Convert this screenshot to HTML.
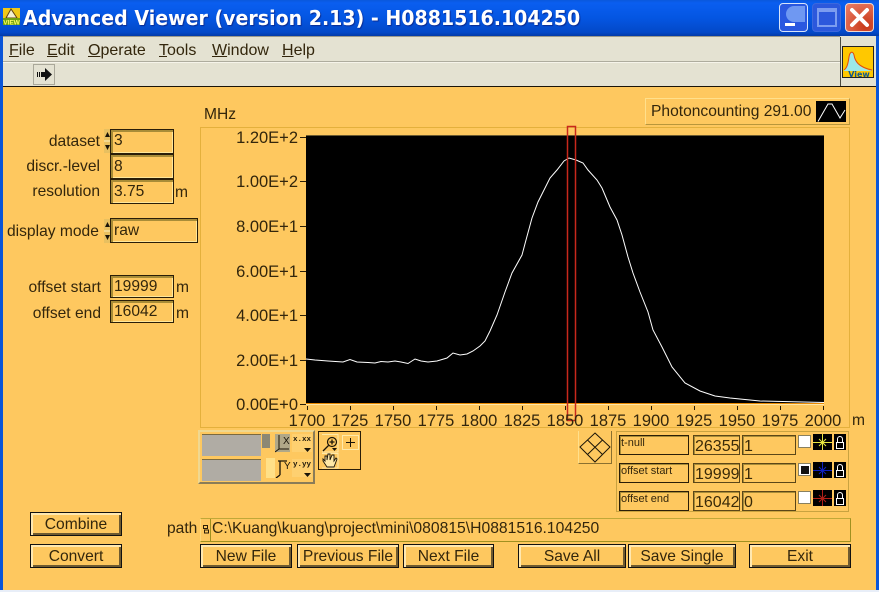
<!DOCTYPE html>
<html><head><meta charset="utf-8"><title>Advanced Viewer</title>
<style>
html,body{margin:0;padding:0}
#p{position:relative;width:879px;height:592px;overflow:hidden;background:#fec85f;font-family:"Liberation Sans",sans-serif;color:#33260c;font-size:15.6px}
#p div,#p svg{position:absolute}
.t{white-space:pre;line-height:18px;height:18px}
.r{text-align:right}
.c{text-align:center}
.f{box-sizing:border-box;border:1px solid #2a1e08;box-shadow:inset 2px 2px 0 #a88c38,inset -1px -1px 0 #ffe79a;padding-left:3px;line-height:18px;white-space:pre}
.b{box-sizing:border-box;border:1px solid #111;background:#fec85f;box-shadow:inset 2px 2px 0 #ffe8b0,inset -2px -2px 0 #6e5a30;text-align:center;line-height:23px;white-space:pre}
.s{box-sizing:border-box;border:1px solid #2a1e08;font-size:11px;line-height:15px;padding-left:1px;box-shadow:inset 1px 1px 0 #a88c38;white-space:pre}
.n{box-sizing:border-box;border:1px solid #5a4618;box-shadow:inset 1px 1px 0 #a88c38;white-space:pre;padding-left:1px;font-size:16px;color:#3a2a08}
.y{left:217px;width:81px;font-size:16.5px}
.x{top:412px;width:60px;font-size:16.5px}
u{text-decoration:underline}
</style></head><body><div id="p">
<!-- title bar -->
<div style="left:0;top:0;width:879px;height:36px;background:linear-gradient(180deg,#0a58dc 0,#0a5ef0 8%,#0456e2 50%,#0348c8 90%,#033aa8 100%)"></div>
<div style="left:0;top:36px;width:3px;height:556px;background:#0a55d8"></div>
<div style="left:876px;top:36px;width:3px;height:556px;background:#0a55d8"></div>
<div style="left:0;top:590px;width:879px;height:2px;background:#e8eef8"></div>
<svg style="left:3px;top:8px" width="17" height="17" viewBox="0 0 17 17"><rect width="17" height="17" fill="#f0c818"/><path d="M8 1L3 10h11z" fill="#f4f0d0" stroke="#604010"/><rect y="10" width="17" height="7" fill="#70a010"/><text x="8.5" y="16.3" font-family="Liberation Sans" font-size="6.5" font-weight="bold" text-anchor="middle" fill="#ffff60">VIEW</text></svg>
<div class="t" style="left:23px;top:5px;height:26px;font:bold 20.6px/26px 'DejaVu Sans',sans-serif;color:#fff;text-shadow:1px 1px 1px #0a2a90;transform:scaleX(.922);transform-origin:0 0">Advanced Viewer (version 2.13) - H0881516.104250</div>
<!-- window buttons -->
<div style="left:779px;top:3px;width:29px;height:29px;box-sizing:border-box;border:1px solid #d8e4fa;border-radius:4px;background:#2a58e0"></div>
<div style="left:785px;top:23px;width:10px;height:3px;background:#fff"></div>
<div style="left:786px;top:6px;width:19px;height:16px;border-radius:9px 0 0 9px;background:#6f98f2"></div>
<div style="left:812px;top:3px;width:29px;height:29px;box-sizing:border-box;border:1px solid #3c68dc;border-radius:4px;background:#2c58dc"></div>
<div style="left:817px;top:8px;width:20px;height:19px;box-sizing:border-box;border:2px solid #7c9cf0;border-top-width:4px"></div>
<div style="left:845px;top:3px;width:29px;height:29px;box-sizing:border-box;border:1px solid #f0d8d0;border-radius:4px;background:radial-gradient(circle at 20px 22px,#c83818,#e87860 90%)"></div>
<svg style="left:845px;top:3px" width="29" height="29"><path d="M7 7L22 22M22 7L7 22" stroke="#fff" stroke-width="4" stroke-linecap="round"/></svg>
<!-- menu -->
<div style="left:3px;top:36px;width:873px;height:50px;background:#e4e2d2"></div>
<div style="left:3px;top:36px;width:837px;height:1px;background:#9c9a8c"></div>
<div style="left:3px;top:61px;width:837px;height:2px;background:linear-gradient(180deg,#aeac9e 50%,#f6f4ea 50%)"></div>
<div style="left:840px;top:37px;width:1px;height:49px;background:#4a4a40"></div>
<div style="left:3px;top:86px;width:873px;height:1px;background:#1a1408"></div>
<div class="t" style="left:9px;top:42px;font-size:16px"><u>F</u>ile</div>
<div class="t" style="left:47px;top:42px;font-size:16px"><u>E</u>dit</div>
<div class="t" style="left:88px;top:42px;font-size:16px"><u>O</u>perate</div>
<div class="t" style="left:159px;top:42px;font-size:16px"><u>T</u>ools</div>
<div class="t" style="left:212px;top:42px;font-size:16px"><u>W</u>indow</div>
<div class="t" style="left:282px;top:42px;font-size:16px"><u>H</u>elp</div>
<div style="left:33px;top:64px;width:22px;height:21px;box-sizing:border-box;border:1px solid #aaa89a"></div>
<svg style="left:36px;top:66px" width="17" height="17"><path d="M9 2l7 6.5-7 6.500V11H5V6h4z" fill="#111"/><path d="M1 6h1v5H1zM3 6h1v5H3z" fill="#111"/></svg>
<svg style="left:842px;top:46px" width="32" height="32" viewBox="0 0 32 32"><rect x=".5" y=".5" width="31" height="31" fill="#ffc800" stroke="#222"/><path d="M2 24C5 22 6 18 7 11C8 5 11 5 12 9C13 15 15 21 30 25L30 24V25H2z" fill="#9ce8e8"/><path d="M2 24C5 22 6 18 7 11C8 5 11 5 12 9C13 15 16 21 30 24" fill="none" stroke="#e04810" stroke-width="1"/><text x="17" y="31" font-family="DejaVu Sans" font-weight="bold" font-size="8" text-anchor="middle" fill="#0c5a90">View</text></svg>
<!-- legend -->
<div style="left:645px;top:98px;width:205px;height:27px;box-sizing:border-box;border-top:1px solid #ffe08c;border-left:1px solid #ffe08c;border-bottom:1px solid #b8963c;border-right:1px solid #b8963c"></div>
<div class="t" style="left:651px;top:103px">Photoncounting 291.00</div>
<svg style="left:816px;top:101px" width="30" height="21"><rect width="30" height="21" fill="#000"/><path d="M2 20.500L12 3H16L24 17L29 9" stroke="#fff" fill="none" stroke-width="1"/></svg>
<div class="t" style="left:204px;top:106px">MHz</div>
<!-- graph frame -->
<div style="left:200px;top:127px;width:650px;height:301px;box-sizing:border-box;border:1px solid #e4b03c"></div>
<div style="left:306px;top:135px;width:518px;height:268px;background:#000"></div>
<div style="left:306px;top:135px;width:518px;height:1px;background:#6a5a30"></div>
<div style="left:306px;top:403px;width:518px;height:1px;background:#e88800"></div>
<div style="left:306px;top:404px;width:518px;height:1px;background:#ffe7a8"></div>
<svg style="left:0;top:0" width="879" height="592">
<path d="M306 359L315 360L328 361L343 362L350 359.500L357 362L368 362.500L375 363L381 361.500L388 362L395 361L401 362L408 363.500L415 359L421 361L428 362L437 361L447 358L453 353L460 355L467 354L473 351L480 346L485 341L490 331L497 315L505 292L512 273L522 255L526 240L532 218L538 202L550 178L557 170L564 161L569 158L576 160L583 163L588 170L597 180L602 188L610 207L617 220L622 235L628 257L633 273L640 292L648 312L653 330L662 347L672 367L685 383L700 391L715 396L730 398L760 401L824 402.500" fill="none" stroke="#fff" stroke-width="1"/>
<path d="M567.500 126.500H575.500V420.500H567.500Z" fill="none" stroke="#c8281c" stroke-width="1.500"/>
<path d="M300 137.500h6M300 181.500h6M300 226.500h6M300 271.500h6M300 315.500h6M300 360.500h6M300 404.500h6" stroke="#2a1e08"/>
<path d="M307.500 406v4M350.500 406v4M393.500 406v4M436.500 406v4M479.500 406v4M522.500 406v4M565.500 406v4M608.500 406v4M651.500 406v4M694.500 406v4M737.500 406v4M780.500 406v4M823.500 406v4" stroke="#2a1e08"/>
</svg>
<div class="t r y" style="top:129px">1.20E+2</div>
<div class="t r y" style="top:173px">1.00E+2</div>
<div class="t r y" style="top:218px">8.00E+1</div>
<div class="t r y" style="top:263px">6.00E+1</div>
<div class="t r y" style="top:307px">4.00E+1</div>
<div class="t r y" style="top:352px">2.00E+1</div>
<div class="t r y" style="top:396px">0.00E+0</div>
<div class="t c x" style="left:277px">1700</div>
<div class="t c x" style="left:320px">1725</div>
<div class="t c x" style="left:363px">1750</div>
<div class="t c x" style="left:406px">1775</div>
<div class="t c x" style="left:449px">1800</div>
<div class="t c x" style="left:492px">1825</div>
<div class="t c x" style="left:535px">1850</div>
<div class="t c x" style="left:578px">1875</div>
<div class="t c x" style="left:621px">1900</div>
<div class="t c x" style="left:664px">1925</div>
<div class="t c x" style="left:707px">1950</div>
<div class="t c x" style="left:750px">1975</div>
<div class="t c x" style="left:793px">2000</div>
<div class="t" style="left:852px;top:412px">m</div>
<!-- left controls -->
<div class="t r" style="left:20px;top:133px;width:80px">dataset</div>
<div class="t r" style="left:10px;top:158px;width:90px">discr.-level</div>
<div class="t r" style="left:10px;top:183px;width:90px">resolution</div>
<div class="t" style="left:7px;top:223px">display mode</div>
<div class="t r" style="left:10px;top:279px;width:91px">offset start</div>
<div class="t r" style="left:10px;top:305px;width:91px">offset end</div>
<svg style="left:104px;top:129px" width="7" height="24"><rect width="7" height="24" fill="#e8c060"/><path d="M3.500 3L1 8h5zM3.500 21L1 16h5z" fill="#1a1408"/><path d="M0 12h7" stroke="#fff2c0"/></svg>
<svg style="left:104px;top:219px" width="7" height="24"><rect width="7" height="24" fill="#e8c060"/><path d="M3.500 3L1 8h5zM3.500 21L1 16h5z" fill="#1a1408"/><path d="M0 12h7" stroke="#fff2c0"/></svg>
<div class="f" style="left:110px;top:129px;width:64px;height:25px;line-height:22px">3</div>
<div class="f" style="left:110px;top:154px;width:64px;height:25px;line-height:24px">8</div>
<div class="f" style="left:110px;top:179px;width:64px;height:25px;line-height:24px">3.75</div>
<div class="t" style="left:175px;top:184px">m</div>
<div class="f" style="left:110px;top:218px;width:88px;height:25px;line-height:24px">raw</div>
<div class="f" style="left:110px;top:275px;width:64px;height:23px;line-height:22px">19999</div>
<div class="t" style="left:176px;top:279px">m</div>
<div class="f" style="left:110px;top:300px;width:64px;height:23px;line-height:22px">16042</div>
<div class="t" style="left:176px;top:305px">m</div>
<!-- palette -->
<div style="left:198px;top:430px;width:117px;height:54px;box-sizing:border-box;border:2px solid #8a7c58;border-top-color:#f0d890;border-left-color:#f0d890;background:#fec85f"></div>
<div style="left:202px;top:434px;width:59px;height:21px;background:#b0aca4;border-top:1px solid #7a6a40"></div>
<div style="left:202px;top:459px;width:59px;height:21px;background:#b0aca4;border-top:1px solid #7a6a40"></div>
<div style="left:262px;top:434px;width:8px;height:14px;background:#8c8874"></div>
<div style="left:266px;top:458px;width:9px;height:20px;background:#ffe088"></div>
<div style="left:275px;top:434px;width:15px;height:18px;background:#b0a888"></div>
<svg style="left:275px;top:434px" width="16" height="44"><path d="M4 1v14H14M4 15L0 18" stroke="#1a1408" fill="none"/><path d="M5 27v14M5 41L1 44M3 27H12" stroke="#1a1408" fill="none" stroke-width="1.300"/><text x="8" y="10" font-size="10" font-family="Liberation Sans" fill="#1a1408">X</text><text x="9" y="35" font-size="10" font-family="Liberation Sans" fill="#1a1408">Y</text></svg>
<div style="left:292px;top:434px;width:20px;height:18px;font:bold 7.5px/12px 'Liberation Mono',monospace;background:#fed070;color:#1a1408;text-align:center">x.xx</div>
<div style="left:292px;top:459px;width:20px;height:18px;font:bold 7.5px/12px 'Liberation Mono',monospace;background:#fed070;color:#1a1408;text-align:center">y.yy</div>
<svg style="left:292px;top:434px" width="20" height="44"><path d="M12 14h7l-3.500 4zM12 39h7l-3.500 4z" fill="#1a1408"/></svg>
<div style="left:318px;top:431px;width:43px;height:39px;box-sizing:border-box;border:1px solid #2a1e08"></div>
<svg style="left:320px;top:434px" width="40" height="35"><path d="M2 .500H18V18H2M2 19.500H18V34H2" fill="none" stroke="#ffe9a8"/><circle cx="12" cy="8" r="4.500" fill="none" stroke="#1a1408" stroke-width="1.200"/><path d="M12 5.500v5M9.500 8h5M8.500 11.500L3 17" stroke="#1a1408" stroke-width="1.300"/><path d="M12 14h5l-2.500 3z" fill="#1a1408"/><rect x="22.500" y="1.500" width="16" height="14" fill="none" stroke="#ffe9a8"/><path d="M30.500 4v9M26 8.500h9" stroke="#1a1408"/><path d="M7 33L3 27V25L5 27V22L7 22V26L8 20H10V26L12 21H14V27L16 24L17 25L14 33z" fill="#ffe9a8" stroke="#1a1408" stroke-width=".9"/></svg>
<!-- cursor panel -->
<div style="left:578px;top:431px;width:34px;height:33px;box-sizing:border-box;border:1px solid #b8963c;border-top:0;border-left-color:#ffe08c;border-right-color:#8a7030;border-bottom-color:#8a7030"></div>
<svg style="left:579px;top:431px" width="32" height="32"><path d="M16 2L31 16L16 31L1 16ZM8.500 9L23.500 23.500M23.500 9L8.500 23.500" fill="none" stroke="#1a1408"/></svg>
<div style="left:616px;top:431px;width:233px;height:81px;box-sizing:border-box;border:1px solid #c8a240"></div>
<div class="s" style="left:619px;top:435px;width:70px;height:20px">t-null</div>
<div class="s" style="left:619px;top:463px;width:70px;height:20px">offset start</div>
<div class="s" style="left:619px;top:491px;width:70px;height:20px">offset end</div>
<div class="n" style="left:693px;top:435px;width:47px;height:20px;line-height:21px">26355</div>
<div class="n" style="left:693px;top:463px;width:47px;height:20px;line-height:21px">19999</div>
<div class="n" style="left:693px;top:491px;width:47px;height:20px;line-height:21px">16042</div>
<div class="n" style="left:742px;top:435px;width:54px;height:20px;line-height:21px">1</div>
<div class="n" style="left:742px;top:463px;width:54px;height:20px;line-height:21px">1</div>
<div class="n" style="left:742px;top:491px;width:54px;height:20px;line-height:21px">0</div>
<svg style="left:798px;top:434px" width="50" height="76">
<rect x=".5" y="1.500" width="12" height="12" fill="#fff" stroke="#888060"/>
<rect x=".5" y="29.500" width="12" height="12" fill="#fff" stroke="#888060"/><rect x="3" y="32" width="8" height="8" fill="#111"/>
<rect x=".5" y="57.500" width="12" height="12" fill="#fff" stroke="#888060"/>
<rect x="15" y="0" width="19" height="16" fill="#000"/><rect x="15" y="28" width="19" height="16" fill="#000"/><rect x="15" y="56" width="19" height="16" fill="#000"/>
<path d="M15 8.500h19M24.500 0v16M21 5l7 7M28 5l-7 7" stroke="#e8e840"/><path d="M15 36.500h19M24.500 28v16M21 33l7 7M28 33l-7 7" stroke="#1020c0"/><path d="M15 64.500h19M24.500 56v16M21 61l7 7M28 61l-7 7" stroke="#b02018"/>
<rect x="36" y="0" width="12" height="16" fill="#000"/><rect x="36" y="28" width="12" height="16" fill="#000"/><rect x="36" y="56" width="12" height="16" fill="#000"/>
<path d="M39.500 8V5a2.500 2.500 0 0 1 5 0V8M38.500 8.500h7v6h-7zM39.500 36V33a2.500 2.500 0 0 1 5 0V36M38.500 36.500h7v6h-7zM39.500 64V61a2.500 2.500 0 0 1 5 0V64M38.500 64.500h7v6h-7z" fill="none" stroke="#fff"/>
</svg>
<!-- path -->
<div class="t" style="left:167px;top:520px">path</div>
<div style="left:200px;top:518px;width:651px;height:24px;box-sizing:border-box;border:1px solid #a09020;border-left-color:#fed878;border-top-color:#c0a838"></div>
<div style="left:210px;top:519px;width:1px;height:22px;background:#a09020"></div>
<svg style="left:203px;top:525px" width="6" height="9"><rect x=".5" y=".5" width="4" height="3" fill="none" stroke="#2a1e08"/><rect x="1.500" y="5" width="4" height="3" fill="none" stroke="#2a1e08"/></svg>
<div class="t" style="left:212px;top:520px;font-size:15.7px">C:\Kuang\kuang\project\mini\080815\H0881516.104250</div>
<!-- buttons -->
<div class="b" style="left:30px;top:512px;width:92px;height:24px">Combine</div>
<div class="b" style="left:30px;top:544px;width:92px;height:24px">Convert</div>
<div class="b" style="left:200px;top:544px;width:92px;height:24px">New File</div>
<div class="b" style="left:297px;top:544px;width:102px;height:24px">Previous File</div>
<div class="b" style="left:403px;top:544px;width:91px;height:24px">Next File</div>
<div class="b" style="left:518px;top:544px;width:108px;height:24px">Save All</div>
<div class="b" style="left:628px;top:544px;width:108px;height:24px">Save Single</div>
<div class="b" style="left:749px;top:544px;width:102px;height:24px">Exit</div>
</div></body></html>
